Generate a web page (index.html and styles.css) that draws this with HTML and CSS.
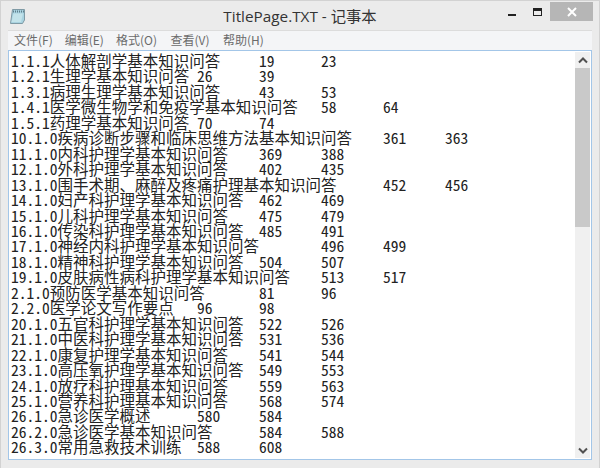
FILE: index.html
```html
<!DOCTYPE html>
<html lang="zh-CN">
<head>
  <meta charset="UTF-8" />
  <title>TitlePage.TXT - 记事本</title>
  <link rel="stylesheet" href="styles.css">
</head>
<body>

  <div class="window">
    <!-- Title bar -->
    <div class="titlebar">
      <div class="titlebar-left">
        <svg class="app-icon" width="17" height="18" viewBox="0 0 17 18">
          <path d="M3.5 2.5H15.5V13L13.5 16.5H1.5Z" fill="#a9d3e0" stroke="#7f9aa5" />
          <path d="M4 4.5H15" stroke="#5f7f8c" stroke-width="2" stroke-dasharray="1 1" />
          <path d="M4.5 6.5H14L12 15H2.5Z" fill="#c3e3ea" />
        </svg>
      </div>
      <div class="title">TitlePage.TXT - 记事本</div>
      <div class="window-btns">
        <div class="btn-min"></div>
        <div class="btn-max"></div>
        <div class="btn-close">
          <svg width="10" height="10" viewBox="0 0 10 10">
            <path d="M1 1L9 9M9 1L1 9" stroke="#fff" stroke-width="2" />
          </svg>
        </div>
      </div>
    </div>

    <!-- Menu -->
    <div class="menubar">
      <span class="menu-item">文件(F)</span>
      <span class="menu-item">编辑(E)</span>
      <span class="menu-item wide">格式(O)</span>
      <span class="menu-item wide">查看(V)</span>
      <span class="menu-item">帮助(H)</span>
    </div>

    <!-- Editor -->
    <div class="editor">
      <pre class="content">1.1.1人体解剖学基本知识问答	19	23
1.2.1生理学基本知识问答	26	39
1.3.1病理生理学基本知识问答	43	53
1.4.1医学微生物学和免疫学基本知识问答	58	64
1.5.1药理学基本知识问答	70	74
10.1.0疾病诊断步骤和临床思维方法基本知识问答	361	363
11.1.0内科护理学基本知识问答	369	388
12.1.0外科护理学基本知识问答	402	435
13.1.0围手术期、麻醉及疼痛护理基本知识问答	452	456
14.1.0妇产科护理学基本知识问答	462	469
15.1.0儿科护理学基本知识问答	475	479
16.1.0传染科护理学基本知识问答	485	491
17.1.0神经内科护理学基本知识问答	496	499
18.1.0精神科护理学基本知识问答	504	507
19.1.0皮肤病性病科护理学基本知识问答	513	517
2.1.0预防医学基本知识问答	81	96
2.2.0医学论文写作要点	96	98
20.1.0五官科护理学基本知识问答	522	526
21.1.0中医科护理学基本知识问答	531	536
22.1.0康复护理学基本知识问答	541	544
23.1.0高压氧护理学基本知识问答	549	553
24.1.0放疗科护理基本知识问答	559	563
25.1.0营养科护理基本知识问答	568	574
26.1.0急诊医学概述	580	584
26.2.0急诊医学基本知识问答	584	588
26.3.0常用急救技术训练	588	608</pre>
      <div class="scrollbar">
        <div class="scroll-btn">
          <svg width="10" height="7" viewBox="0 0 10 7"><path d="M1 5.5L5 1.5L9 5.5" fill="none" stroke="#505050" stroke-width="2" /></svg>
        </div>
        <div class="scroll-thumb"></div>
        <div class="scroll-track"></div>
        <div class="scroll-btn">
          <svg width="10" height="7" viewBox="0 0 10 7"><path d="M1 1.5L5 5.5L9 1.5" fill="none" stroke="#505050" stroke-width="2" /></svg>
        </div>
      </div>
    </div>
  </div>

</body>
</html>
```

FILE: styles.css
```css
body {
  margin: 0;
  font-family: "Noto Sans CJK SC", "Noto Sans", sans-serif;
}

.window {
  width: 600px;
  height: 468px;
  box-sizing: border-box;
  padding: 1px 7px 8px 7px;
  background: #ebebeb;
  border: 1px solid #d2d2d2;
  border-bottom: none;
  display: flex;
  flex-direction: column;
  overflow: hidden;
}

.titlebar {
  height: 28px;
  display: grid;
  grid-template-columns: 1fr auto 1fr;
  align-items: start;
  flex-shrink: 0;
}

.titlebar-left {
  padding: 5px 0 0 1px;
}

.app-icon {
  display: block;
}

.title {
  font-family: "Open Sans", "Noto Sans CJK SC", sans-serif;
  font-size: 15.3px;
  line-height: 28px;
  color: #333;
}

.window-btns {
  display: flex;
  justify-content: flex-end;
  align-items: flex-start;
  margin-right: -1px;
}

.btn-min {
  width: 8px;
  height: 2px;
  margin: 12px 17px 0 0;
  background: #222;
}

.btn-max {
  width: 7px;
  height: 4px;
  margin: 6px 8px 0 0;
  border: 1px solid #222;
  border-top-width: 3px;
}

.btn-close {
  width: 43px;
  height: 19px;
  background: #b6b6b6;
  display: flex;
  align-items: center;
  justify-content: center;
}

.menubar {
  height: 19px;
  flex-shrink: 0;
  display: flex;
  gap: 12px;
  padding-left: 6px;
  background: #f4f5f7;
  border-top: 1px solid #dcdcdc;
  font-size: 12px;
  line-height: 17px;
  color: #6b6b6b;
}

.menu-item.wide {
  padding-right: 1.5px;
}

.editor {
  flex: 1;
  min-height: 0;
  display: flex;
  background: #fff;
  border: 1px solid #a3c6e8;
}

.content {
  flex: 1;
  min-width: 0;
  margin: 0;
  padding: 2px 0 0 2px;
  font-family: "Noto Sans CJK SC", sans-serif;
  font-feature-settings: "hwid";
  font-size: 15.5px;
  line-height: 15.45px;
  tab-size: 62px;
  color: #222;
}

.scrollbar {
  width: 15px;
  margin: 1px 1px 1px 0;
  display: flex;
  flex-direction: column;
  background: #f0f0f0;
}

.scroll-btn {
  height: 16px;
  flex-shrink: 0;
  display: flex;
  align-items: center;
  justify-content: center;
}

.scroll-thumb {
  height: 159px;
  flex-shrink: 0;
  background: #c9c9c9;
}

.scroll-track {
  flex: 1;
}
```
